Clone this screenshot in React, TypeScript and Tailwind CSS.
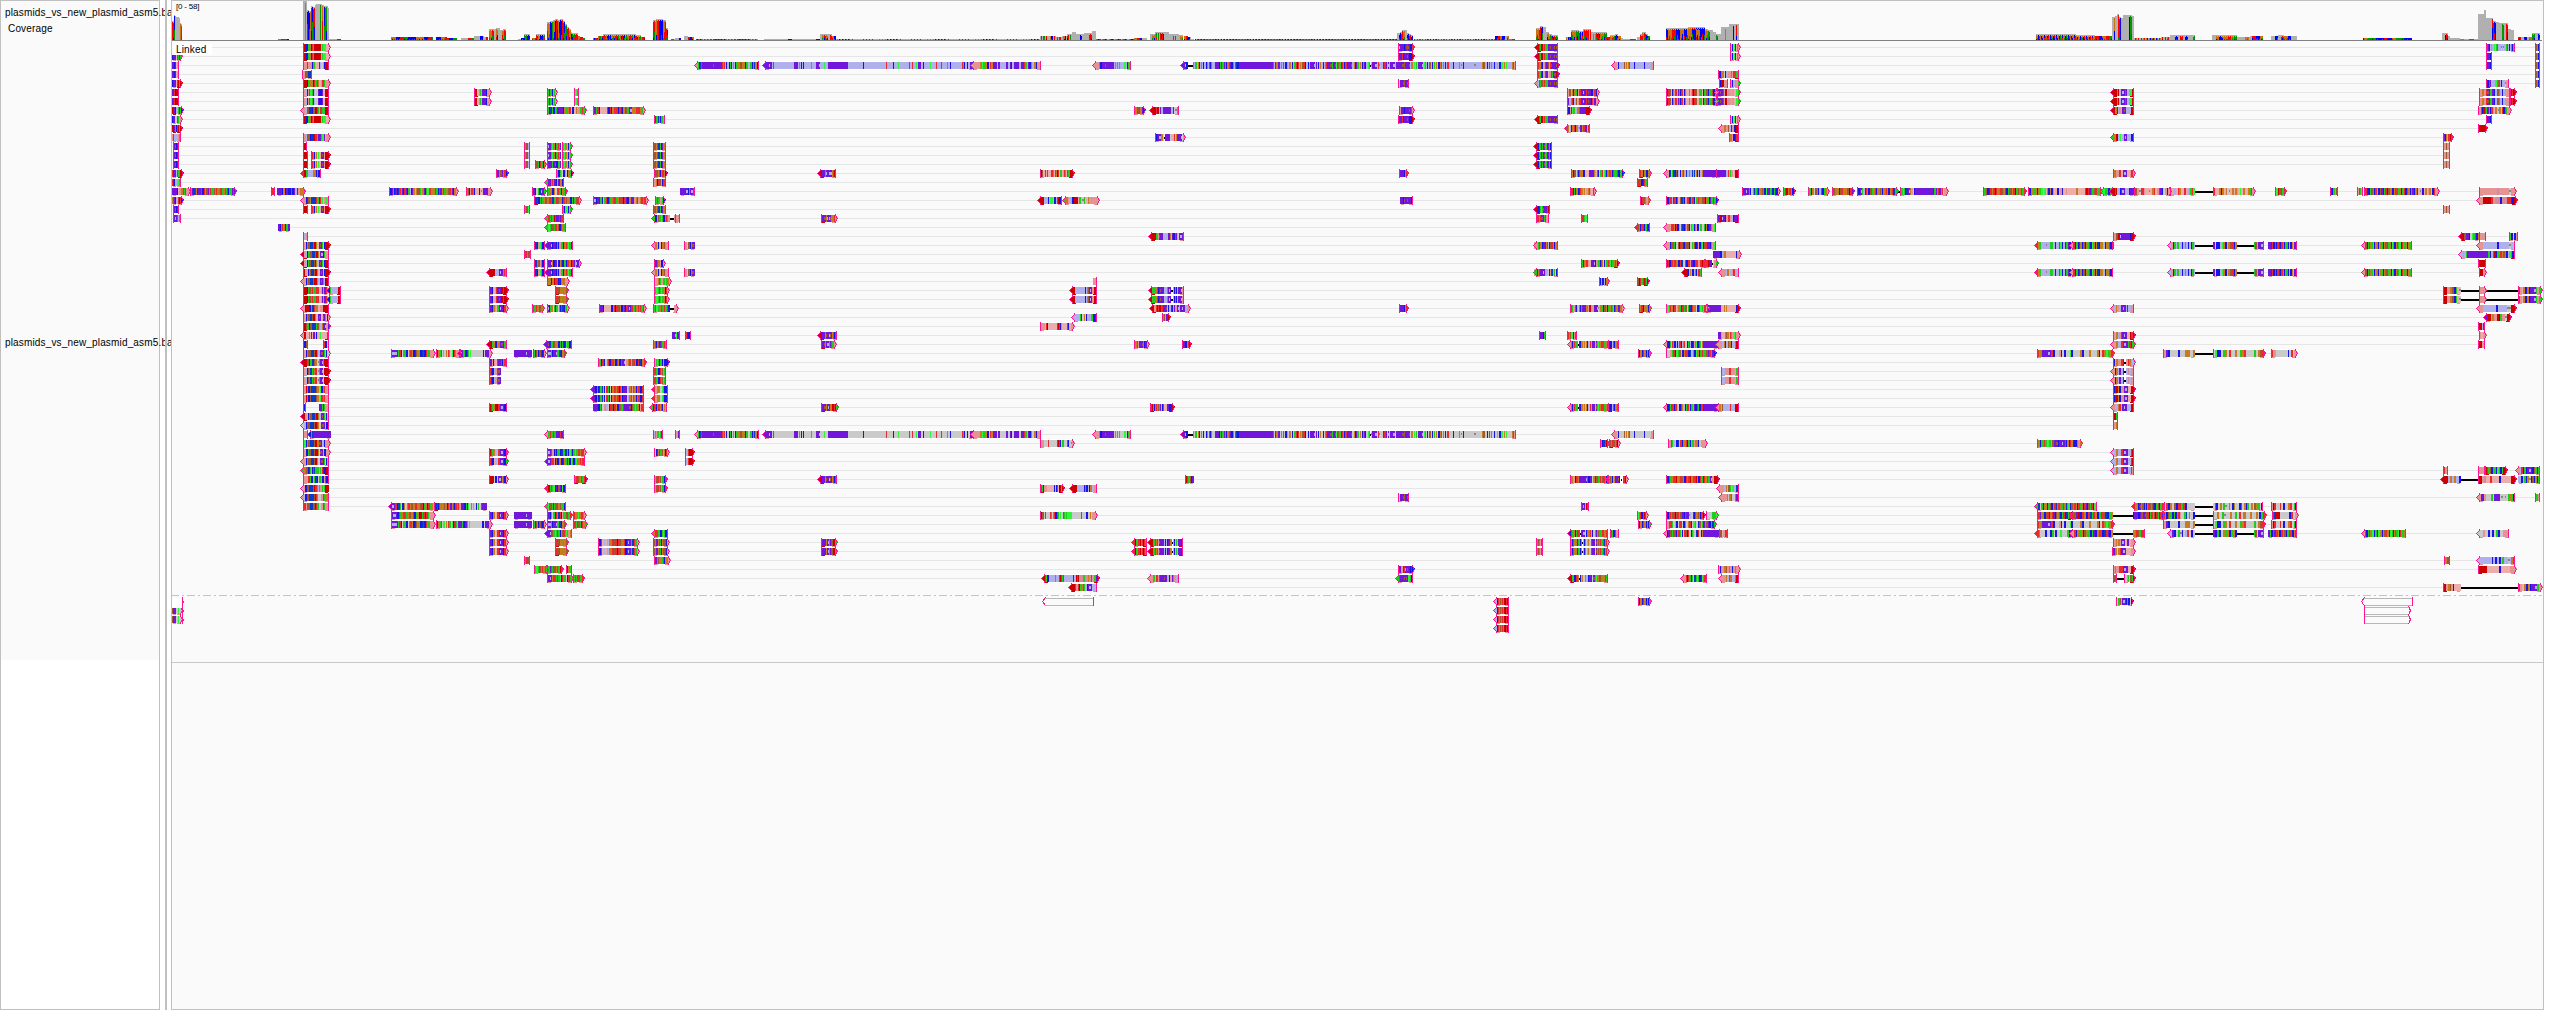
import React from "react";

const COLORS: Record<string, string> = {
  r: "#ea2a2e",
  s: "#cc0000",
  n: "#e59393",
  p: "#ecadad",
  l: "#b0b0ec",
  x: "#cacaca",
  u: "#7316dc",
  b: "#1a14e6",
  d: "#0a3cc8",
  g: "#22cc1e",
  e: "#2ef53a",
  o: "#cc7a22",
  t: "#ae8a18",
  w: "#a0582e",
  y: "#8c8488",
  m: "#d68a9c",
  k: "#000000",
};

const PINK = "#ff1493";

// Reusable stripe patterns; "z" stands for the background of the read.
const MOTIFS: Record<string, string> = {
  Q: "n2lbgw2d3ws2tz",
  R: "zujugzb",
  A: "ngbdru10ju8rorzbzbgbztzbgotgwrogtbgozgtbgdgobg",
  B: "u4iuzrz19u3zozbzbz6gz4u3iz3ez3u19z13bz11z10rz5bz4ez9rz2rz2ezu3z2bz5ez5rz3rz5oz2bz10rgbzbz2u3",
  C: "n5o2ego2bzrou3zu2z4u2zubzu4z2u2rgnuboz2obn3",
  D: "n4obu3juu6zozgzoz4ezbgog",
  E: "u2ibk5ozgzobzgzbzbozrbgz2u4bgugugbgorubgzrdb2u30wzuou2zozwzbezgozbzgrbrzoewrbzzbzu3izuzbzozbzgru3jgu2jerwgurgbwru3jz2obugzozboubzegkyu3izryz3uruzizu3izu3u3jwu4jzozezgzu3izegzbzwzbzgzozbowzgzbzrz4bz4ozyzbz9yz6owz2bzrzozbz2ezb2ezozez4orn2",
  F: "bgdzozgboruzbguorgzbrwu3ibgozbrogzb",
  G: "znbrbgzbrogzdbgrzbgrzozbrzdgzbrzdgozbwrgzezdgbzbgrzo",
  H: "ogrobrgubgowbzo2zbzorbuiuzbrorwgorgogworg",
  I: "u3bwruwu2iwzo",
  J: "u4jbujuiu2blu",
  K: "bguwdgbdu2bizu",
  L: "obguobgrb",
  P: "rgwbngozbwrgbrwogrbgobrgbwogrbgdrob",
};

type Read = { y: number; x0: number; x1: number; caps: string; pat: string };

// rows  start  end  caps  pattern[=background]
const READS = `
1 172 181 .> bu3prgsg
2,3 172 179 .| u2buzn2=p
4 172 181 .> bu3prsgs
5,6 172 179 .| u2rbus3
7 172 182 .> su2blgsgb
8 172 181 .> bu2zrgn2=x
9 172 181 .> s2uobrsgs
10 172 181 .| nrl3ngn
11,12,13,18 173 179 || u2jbub
14 172 182 .> ru2zrgs2=l
15 172 181 .| rubznegn=l
16 172 189 .> u5bzngorgrn3=p
17 172 182 .> orubzrsrb=l
19 173 181 || u2iuwlgn
0,1,8 303 329 |> s3bgotbrgs6nge2p3
2 303 329 || n3rnnebglp2ulxnbs3
3 302 312 || nlnw2d3b
4 303 329 |> s3bgotbrgwopnrgn3
5,6 303 329 || n2lbnregdlx2ub2up2s3
7 303 329 <| n2lw2d2bw2srgnrgogs3
10 303 329 |> n2lw2bds2rou2geupn2
11 303 307 || s3r
12,13,18 303 308 || s4r
12,13,18 311 329 |> brgblozepujunss3
14 303 321 <| rsgol4ogbgbo
16 190 235 |> bouduodu3rbrowruorgoworgtgrgtowgrbgouru
16 271 275 || grs
16 277 304 .> u3bobub2rbuluno3
17 303 329 <| n2bdwtd3srgsrepne2n
20 278 290 .. u2bgrobgou2
21 303 308 || nlnr
22 303 329 |> QRs4=p
23 303 329 <| sQuibgn4=p
24 303 329 <| sQRs4=l
25 303 329 |> s2QRs4=p
26 303 329 <| QRs3=l
27,28 303 328 |. s3bgwgrogrwrpnueurn
27,28 329 341 <| bgl6s3
29 303 329 <| ns3bgdrtoznns4=p
30 303 329 |> QzujuzRn=p
31 303 329 |> s2wgbwd3gwezouinu=l
32 303 329 <| QujuujugbBs3=p
33 303 308 || nbwn
33 323 329 || nrbp2
34 303 329 |> QRx2=l
35 303 329 <| s3w2bgd2woxyguigs4
36,37 303 329 |> n2lbwgdgworxyguips4
38 303 329 || n2sgbwd4wolebgrnn2
39 303 329 || n2sgbwd4wolergrnn2
40 303 306 || nbr
40 319 329 .| u2gdgn3
41 303 329 <| s2QRl2=l
42 303 329 <| xlbwwd3wsroxujulbn
43 303 308 || n4
43 310 331 <. bgdu18
44 303 329 |> xebtwd3wsgojulbnn2
45 303 329 |> Qjjulbn3=x
46 303 329 <| QRn2=x
47 303 329 <| gogwbdgebwdgogngnrsbs3
48 303 329 || n4rgblgdbxgebnrbn
49 303 329 <. lnbwwd3wsrolgngngs3
50 303 329 <| nlbwwd4wsroxxenrgogn
51 303 329 || nrnw2d3wsrgx2nrgnnn
5,6 474 490 |> s3xpegnu4bn3
14 496 507 |> u2owuorb
16 389 457 |> ubutbubdroubrubglbuolowrgeoubgewrogtrgbwuorgtowrgubon
16 466 491 |> rgwbnrgbp4bpypu4n3
25 489 507 <| s5l4uiuorgl
27,28 489 507 |> rubplrujusrs2
29 489 507 |> nubonpguiubrn
33 489 507 <| s2gosbogujugn
34 391 434 |> ui3ugrbzgobzgrobdwtobdubrogn3=x
34 436 460 |> rbogrzezozrgzebrgn3=x
34 460 491 <> u3gdbugzezx9bzu3n2=x
34 514 532 .. u12iu5
35 489 507 || runbnpru2rbgrg
36,37 489 501 |. rublnrju
40,45 489 507 || srgosbruiubx
45,46 489 507 |> rubplpruiubg
48 489 507 |> ss3xbxuiuorbn
51 391 434 <. uiurbdgzbozorowtorgowrbgobrgon=x
51 434 487 |. sdubrtogwobrguorbrgrnu3bgbezgzezbzgzru4=x
52 391 434 |> ui2ubrgorwgoworbgobsgrsrgn3=x
52,54,55,56 489 507 |> ruboxpruiubrn
53 391 434 |> ui3ugrbzgobzgrobdwtobdubrogn3=x
53 436 491 |> rbogrzezozrgzebrgnu3gdbugzezx9bzu3n2=x
52,53 514 532 .. u12iu5
5,6 547 556 |> bgdgbegn
5,6 574 579 || gegb
7 547 585 |> gbdgbgu4bogorzbzonegrg=p
7 593 644 |> u2grbp5rbrborwrbruborwguiogorwrogn
8 654 665 || nugdobgeg
11,12,13 524 530 || ngwlg
11,12 547 561 |. uiugegobgrgu
13 547 561 |. u4gu2jbgou
11,12,13 562 571 |> bgeonbng
13 535 545 |> rwgbrgbo
11,12,13,18 653 666 || uwowdgbuob
14 556 572 |> rgbgezbexbogb
14 654 666 |> grwowbgrob
15 547 564 <| gu2grgubeudobr
15 653 666 || gnobrwebrg
16 532 545 |> rubzgdiug
16 547 566 |> rgogbozwrgbogr
16 680 695 .| u5ibouirn
17 534 580 |> sdubgrgowgorwdgorwgobrgwogbgdgwrn
17 593 647 |> uibudgbpgrbrgowrgorwrbruboou2nornorgrn
17 655 664 |> rgwgnegb
18 524 530 || rgweb
18 562 571 |> bgbenbng
19 547 564 <| grgrgsru2rurn
19 654 679 <. gbewgegbgrgnk3n4
19 675 680 || grgd
20 547 566 <| gegrwgrowbwogn
22,25 534 545 || rdbnegbo
22,25 547 573 <| u3ibu2bgbnogborgegdb
22,25 654 669 <| zonbpbowenb=n
22,25 684 695 |. rnxwbgju
23 524 531 || srgwg
24 534 545 || bdgwngbw
24 547 580 |> u3iobu2zborbgobrgobruniun
24 654 664 |> nuwonbl
26 547 568 |> sotboswrbdbogonn
26 654 670 |> upnorgnogegon
27,28 555 567 |> srwrotgow
27,28 654 668 |> bgegrgegobrn
29 532 543 |> uwgrotwgo
29 547 568 |> uibgozgbgozgbrdbogn
29 599 645 |> buubp6borbrwrobrubruiurogrorgrgrn
29 653 677 |> gwegorgrgrbk3nn
14 820 836 <| s2u3oiui3owsr
19 821 836 |> su2joiuijotrn
32 546 573 .. h9
32 672 680 .| u2ieub
32 685 691 || rsbu
32,48 820 837 <| s2u3ojuijuowbrn
33 546 572 <| u2jdogrwgotbgbgdbdegb2u
33 653 667 || bowbgwurgorgn
33 821 835 |> su2jouiouwgtn
34,53 533 545 |> rgswobrwubsn
34,53 547 565 |> ui2gbu2igudbow
35 598 645 |> dgbrbzorbwrobrobruiznornwrgbrdbor
35 654 668 |> bngegbgbeb4
36,37 653 666 || brwgobrgwego
38,39 593 644 <| u2bgbdgdlbzrgbzborworbrobu3zlornwobgrwbro
40 593 644 .| u4bgrznelxbrwbrobrwgru4jbwgegobnrb
38,39 654 668 <| rnotgzegb3
40 652 667 <| gsrwbgrowblonr
40 821 837 |> su2jouiuotsrsg
43 547 564 <| ngrgrgu3rur
43 653 663 || glgngnguo
43 675 680 || enug
43 490 500 .. h5
45 547 585 |> uiurnbwbgobdogdgbegbgegortrrn
46 547 585 <| uiuwrnbwbgobdogdgbegbgegortrr
45 654 668 |> gxbuorgwnobrn
45,46 685 693 |> nlrbss
48 574 586 |> sgrwgorgrs
48,49 654 666 |> gewrgwegbr
49 547 566 <| rsgwgebubwubebw
51 547 566 <| gewrgdgwrotwogbn
52 547 571 |> ouboxgbrgdrbngowrgr
52 573 585 |> grogegorgn
53 573 586 |> grgrwgsrog
54 547 572 <| u2irwgegrgbowrgeonob
54 654 668 <| orwgobgegbu
55,56 555 567 |> srwrotgow
55,56 598 638 |> gbrplpnlogrwrbrwgorbuiugdrgn
55,56 653 668 |> rwguowgbowrbn
55,56 821 836 |> su3ouiouwssg
57 524 530 || sgrwb
57 654 669 |> bugwgogwbogn
58 534 547 |> bgegrwgrowg
58 547 562 |> uguwgwrorgsr
58 566 572 || rbogn
59 547 572 |> u2iuorwgrgebrgoxbrgo
59 573 583 |> rgwgrwgor
2,43 697 759 <| A=L
2,43 765 973 <. B=L
2,43 973 1041 <| C=L
2,43 1095 1131 <| D=L
2,43 1183 1516 <| E=L
2,43 1614 1654 <| n3lbz5wzozowz5bz9bz6n3=L
7 1134 1144 |> rorwroub
7 1152 1179 <| s3rs2lulu7lluzyog
10 1155 1184 |> gbsuioozku4zp3rpou3izn
14 1040 1073 |> gbwprzrpz2rgzrobrzgznrgzrgs3=p
17 1040 1062 <| s3l3ble2zblrsbp=l
17 1065 1098 <> gonlnbs3pgpygppon6
21 1151 1184 <| s4gonju2zl3u2olubruzxuiun=l
26 1093 1097 .| n3
27,28 1072 1097 <| s3l8bzowuiunsss=l
27,28 1151 1184 <| sg3orbuju2zl2ouiuklbgbzu2inn=l
29 1152 1189 <> s2nrsrswru2jlblublunuiluiu2lnn
30 1074 1097 <| l5gbzozblnlogbss
30 1162 1169 |> ngwnu2s
31 1040 1073 |> n4prbp7rsrbepp3rbpnn
33 1134 1148 |> rornu2jgbun
33 1182 1190 |> u3bors
40 1150 1173 |> srsgbgrowoulzbrp3u2bbss
44 1040 1073 |> n3x4rzx5rsrbxgxxxrbxyn
48 1185 1194 |. rswgowbuu
49 1040 1063 |> srgbn3p8bpbrpbsgs
49 1072 1097 <| s4l5boblbolln2
52 1040 1096 |> gbwzrz3rgzorbrgzezrgege4zz6rz4bz2oznn2=x
55,56 1134 1147 <| rbgorwsgrbrgs
55,56 1150 1183 <| s3gwornju3lblbu2oklblglu2s2
59 1044 1098 <> srgbl2z4gz2rsrgrz8dlsrsm4gm3ommrngous=l
60 1071 1097 <| s3rnrbgowglbuiuzll2=l
59 1150 1179 <| n3glrwnru3ju2lbnluonlng
0 1398 1413 |> liu4bujrjub2r
1,8 1398 1413 |> lu3rdu3jub3s
4,50 1398 1409 || nxu2jwujr
7 1399 1413 |> rnu3bu4juwn
14,29 1399 1407 |> su3bor
17 1400 1413 .| u3bjuju3bu
58 1398 1413 |> ru2nuriujubub
59 1398 1413 <| gru3jujuegbu
22,25 1534 1536 .. n
0,1,8 1537 1558 <| s2rgsgrogou2ju2juju
2 1537 1558 |> rroublnruwnrju2uju
3 1537 1558 |> rrogublnrupnnrgujjsu
4 1537 1558 <| nlrgwgrogou2ju2juju
11,12,13 1536 1552 <| sdbgugujogugbr
18 1536 1550 <| s2bdgegju3wsg
19 1536 1549 || nrorjugrnr
22 1536 1558 <| negrobu3orzbwrobgob=l
25 1536 1558 <| gdoru3iunlxbnudlgxbu=l
55,56 1536 1543 || egwgnrr
32 1539 1546 || ou2bgn
5 1567 1598 |> onwntbogbnru2iurujub2orbn
6 1567 1598 |> zuzorbzwznru2iurujubrounn=l
7 1567 1590 |> rbnuegllowu5s3
9 1567 1590 <| woxlborbo2lyu2oru2nrr
14 1571 1623 |> nobwzgbrogobzpzpu4onpwbzgrpeobgorgbwgogwbgob
16 1570 1595 |> grbgdtbsronoznornzrn=p
19 1581 1588 || grger
24 1581 1618 |> rgdorwnppu2ibnegbroxblgrgewgtros
26 1599 1608 |> rbeblbog
29 1570 1623 |> orgnwblxgbou3ognusnnu3iylogbwrobgorgebroguogn
32 1567 1577 || r2owebnru
33,40 1570 1608 <. ngbtrgoksbo2nozobzrnu3zjoegorwgtor=l
33,40 1608 1619 || sdblrbowb
44 1600 1608 |> ogbdrsr
44 1609 1619 |> swgrwgrbn
48 1570 1608 |> egonbrwou6irbu2zoouwgortwrgbe
48 1608 1627 <> rgwgbeou3jbhkhrrsn
51 1581 1589 || suiunsrb
54 1570 1608 <| bwgobgrwku2ixbgornbzouowgtrwort
54 1610 1619 || rgbrnn
55,56 1570 1608 |> rtbwtgosgtboknboznorpzru3zjowgrogwdgrn
59 1570 1608 <| s2gtbrwokbnozollbu3zjoegorwgtorgg
14 1639 1650 |> srobt2bt2
15 1637 1648 || srwbsrgn
17 1640 1649 |> srwgno
20 1637 1650 <| rwgbwrbogsbb
26 1637 1648 |> swbrgwsrgs
29 1639 1650 |> sorbot2bt
34,53,70 1638 1650 |> wbogbrotbobg
52 1637 1647 |> gegrbrsrn
5,6 1666 1717 |> obrwzbonrnuobrzbozpoznrbrwzpogzbgowbtgowbtg=p
14 1666 1716 <. n3bdlgdbwdlxblornldlloldndloblbllou12
14 1716 1739 || u8lrngnxps3
17 1666 1717 |> nbwrlurbrpwdrbnwrdgrbpgrgowrbogbugrgb
20 1666 1716 <| n4wrobrbnxrdbwnwbxgebonbxgoxgbobuuonee
22 1666 1716 <| n3brwgdxwbrwdbwrwbxgewbunbgebwruuboneg
24 1666 1705 |> urbrgrobrdxwbrnubrwnrsr
24 1705 1717 |> grsuukxng
25 1684 1702 <| s3blolblgblrgg
29 1666 1707 |> negrodrpnogdrgwxgdbrogxbwegern
29 1707 1739 |> u2ju10lp2opop8bss
33 1666 1718 <. ndbglrgblbzrbzorxbgrzbdngebrgxou12=l
34 1666 1715 |> uxxngrbegwlborwbdlgbeobgrgtwurgub
40 1666 1718 <. nbdgrwbrlxbrolbgrnbgeubrgbwruu10
44 1668 1706 |> nnrglxbdlrbgorbgbegnogbxnn3
48 1666 1718 |> b2rgowrsogrwgbrgrsowrsgbrgsrowguins3
52 1666 1704 |> bbwrgwrbwrowrubru2ylxubrowgbrb
52 1706 1717 |> nx4g3e
53 1666 1715 |> unwrgxnbxwrxbgxorbzegxbwnguowubgdg=x
54 1666 1719 <. nbuwrgwrbgrglbxrwbrxbgezdbrxbou13=x
54 1719 1728 || nwpnnrn
59 1683 1707 <| nnrbrgbgxdgegbdeorn
0,1,8 1730 1739 |> plblebpgn
3 1718 1739 || rbgoxblnngnrwgs
4 1719 1728 || bs2nnn
4 1730 1739 |> nbleng
5,6 1717 1739 <> mujurnsnmnlnppeg
9 1721 1739 <| nnonwlsnbs2
10 1729 1739 || nonbsrs
19 1717 1739 || uusiubnrnlbu2s
23 1713 1740 .> u5blnopp6bn2
25 1721 1739 <| n3loplnrlln
32 1718 1739 .> u2nppowopronegn2
33 1718 1739 <| n3loblwobl2gss
36,37 1721 1739 || nllnnnrnnnlgn
40 1718 1739 <| nonwlllllrlllsss
49 1719 1739 <| n4lolwglelldb
50 1721 1739 <| n4oxowxxgu2
58 1718 1739 |> nbnnowngnbnonn
59 1721 1739 <| n3olwollgss
16 1742 1779 |> u3iugbxgdgrbogwgbeuugobgubn
16 1783 1794 |> grsorgb
16 1808 1828 |> rgbozwgblrbgoe
16 1832 1853 |> rwgotbwrogowbru
16 1857 1897 |> rbuiglsrgbwrgorbgowgbogrtbogrdog
16 1897 1900 .. k2
16 1900 1947 |> rgegbduionxbu14dgugruorxnn
16 1983 2025 |> ngwbsrorbrogrworbgwrorbgworgr
16 2028 2101 |> ubotgobtgezezobobnpzbznbpznp6ozpzpzwsrurgwrogr=p
16 2103 2112 <. eggbg
5,6 2113 2134 <| s3oslluiurulleess
7,22 2113 2114 .. r
7 2113 2134 <| s2oslenlujulllldss
10 2113 2134 <| gosblepluiulllbn
14 2113 2134 |> nonnrrpuiuppnrn
16 2112 2134 <. sswsllbuiulllbu3
16 2134 2170 |> rwnywrnppyporpnrubznbn
16 2170 2195 |. npllpropprplegre
16 2195 2213 .. k18
16 2213 2254 |> rpppobopozypoponpepoppogrn
16 2275 2285 |> geswrgr
16 2330 2338 || sdbgewg
16 2357 2363 || rnrgeb
16 2364 2438 |> grsbgwgbrebwubgrbwogborwgobgrbwobgubouzyzbzoznozbrn2=p
21 2113 2134 |> lnwrsiu7bss
22,25 2037 2072 <. roglllyllgglbllreblsgubl=l
22,25 2072 2113 <| nrbgbutbwbtgrbeobtdbotlbotrbo
22,25 2170 2195 <. lnbglgllblolblbgl
22,25 2195 2213 .. k18
22,25 2213 2237 .. uxbbleoblowrbo
22,25 2237 2254 .. k18
22,25 2254 2264 .| gwnu2iu
22,25 2268 2297 .| u2drbwbrubrobtgblbolun
22,25 2364 2412 <| nwbgrtgebogbetgbowrgtbegbowgebrogtbogb
54 2364 2406 <| nwbgrtgebogbetgbowrgtbegbowgebrogtg
29 2113 2134 <| nlonlluiulullnl
32 2113 2134 |> nlolnruiuppsrs
33 2113 2134 <> nnollruiugrsg
34,53 2037 2113 |> rtguu2iurbxxnbxbxxebxxxxobxxxoxxxobxroegor
35 2113 2134 |> blonnruknronl
36,37 2113 2134 <| nboluluklmlnn
38,39 2113 2134 |> busobnnuiuppss
40 2113 2134 <| nllorluiulllss
41 2113 2118 || rsgs
42 2113 2118 || rnon
44 2037 2081 |> otbgorgnegewuujbuuiurbobrodbbtno
45,46 2113 2134 <| llollruiullrs
47 2113 2134 <| llollruiullrn
51 2037 2097 <| gdxgbtobgwbgrdorogrtdgebwgrtbrgobrubwgrbeg
51 2134 2164 <. rgobujgwbtborwowubgtwbgrw
51 2164 2195 |. xrboxwbrgrbxxxx
51,52,53,54 2195 2213 .. k18
51 2213 2263 .| xwbxtxgyxgxbtxxbrxobgxoxwtgxb
51,53 2271 2297 || nbrxxrxbxxorxgb
52 2037 2072 |. brutgbwrsorubwtrbgrbdgrs
52 2072 2113 <. rwusbrobrdgrobgrwdbgo
52,54 2113 2133 .. k20
52 2133 2163 .> bu3burwujwrbgrowbrguru
52 2163 2195 |. rtbwgobgbornxxgdxgxxb
52 2213 2265 |> xxoxxgyxxoxxgxrxogxxoxxoxbgr
34,53 2163 2195 |. nnubxxxxxbxxxoooxxo
34 2195 2213 .. k18
34,53 2213 2264 |> xebbxgoxrxxoxxgorxxxxgxowr
52 2272 2297 |> rdssxxxxxbrxn
34 2271 2296 |> rnnxxxxxxxbxrxn
54 2037 2072 <. rgxxxbxxbgxbxxexxxgbu
54 2072 2113 <. nrbogobwtgbguborwbdrubo
54 2133 2145 .| ogrwgwrg
54 2170 2195 <. lubxgybxlrxbx
54 2213 2237 .. ubgbxtgobgob
54 2237 2254 .. k18
54 2254 2264 .| gwxu2iu
54 2268 2297 .| ugbwurobrgwbgrwbor
55 2113 2134 |> rnononuiuppuppnn
56 2112 2134 |> uuoxoruiupppnn
58 2113 2134 |> nonnrruiuppss
59 2113 2117 || gwg
59 2117 2124 .. k7
59 2124 2134 |> nxegpwgs
70 2116 2132 |> rxgwnuiubgbxb
10 2443 2452 |> uubonrwsr
11,12,13,18 2443 2450 || nnwnl
0 2486 2515 || rwublmllelgwllylyllgwlblgbgb
1,2,8 2486 2492 || nuubl
4 2486 2509 || sbrulllegwlbllynn
5,6 2479 2510 || nnonrjugublwglblnnn
5,6 2510 2515 |> srs
7 2478 2510 |> nnrbsrgugbrnpopyoprbwgnn
9 2478 2486 |> ss
16 2479 2515 |> nnnnnnnnnmnnnnnynn
17 2479 2516 <> nnsssssrnmmmbmmmrrsbs
21 2461 2479 <. sswuubxegwbo
21 2479 2486 || nnn
21 2509 2518 || gbxbn
22 2479 2515 <| nnlllllllblllllylp
23 2461 2515 <| lnlgu14gblrsbggrowgblegbs
24 2478 2486 || ss
25 2479 2485 |> ssn
27,28 2443 2461 |. ssnnowbgpy
27,28,60 2461 2479 .. k18
27,28 2479 2485 |> nn
27,28,60 2485 2518 .. k18
27,28 2518 2541 |> rnpobobuuigng
29 2479 2515 <> nnlllllllblllllyyss
30 2486 2510 <> ussnonnsbgnnyss
31 2478 2485 || sslu
32 2479 2485 |> npn
33 2478 2485 || ssnn
47 2443 2448 || rnn
47 2478 2485 || nn
47 2485 2506 |> srgwbogbegbgss
47 2518 2540 <| nlrbgbuiubwgbg
48 2443 2461 <. ssslolollb
48 2461 2479 .. k18
48 2478 2515 |> ssnmpprpppbpppppss
48 2518 2540 .| llblgbtybwbtbg
50 2479 2515 <| nuunxxxgxuuuxyxyxgogb
50 2535 2540 || lgng
0,1,2,3,4 2535 2540 || gwgbg
54 2479 2509 <| xxnxxbxbxgbxxnnn
57 2444 2450 || oows
57 2479 2515 <| lllllllblblblgllylor
58 2478 2515 |> sssspppppbppppnn
60 2443 2461 |. ssnownbpppp
60 2461 2518 .. k30
60 2518 2541 |> rnpobobuuign
71,72 172 181 .> wu3xxexx
70,71,72,73 1496 1509 <| lbwrtworgosbrgdx
`;

function expand(p: string, bg: string): [string, number][] {
  const flat = p.replace(/[A-Z]/g, (m) => MOTIFS[m] ?? "");
  const out: [string, number][] = [];
  const re = /([a-z])(\d*)/g;
  let m: RegExpExecArray | null;
  while ((m = re.exec(flat))) out.push([m[1] === "z" ? bg : m[1], m[2] ? Number(m[2]) : 1]);
  return out;
}

const rowTop = (r: number) => (r >= 70 ? 598 + (r - 70) * 9 : 44 + r * 9);

const paths: Record<string, string> = {};
const extents: Record<number, [number, number]> = {};
let backing = "";
let outline = "";
const arrows: { d: string; fill: string }[] = [];

function put(c: string, x: number, y: number, w: number, h: number) {
  paths[c] = (paths[c] ?? "") + `M${x} ${y}h${w}v${h}h${-w}z`;
}

for (const line of READS.trim().split("\n")) {
  const [rows, a, b, caps, spec] = line.split(" ");
  const x0 = Number(a);
  const x1 = Number(b);
  const [pat, bgSpec] = spec.split("=");
  for (const rs of rows.split(",")) {
    const r = Number(rs);
    const y = rowTop(r);
    const bg = bgSpec === "L" ? (r === 2 ? "l" : "x") : bgSpec ?? "x";
    const tokens = expand(pat, bg);
    if (tokens[0][0] === "h") continue;
    const total = tokens.reduce((s, t) => s + t[1], 0);
    const e = extents[r] ?? [x0, x1];
    extents[r] = [Math.min(e[0], x0), Math.max(e[1], x1)];
    if (tokens[0][0] !== "k") backing += `M${x0} ${y - 1}h${x1 - x0}v9h${x0 - x1}z`;
    let acc = 0;
    for (const [c, n] of tokens) {
      const s = Math.round(x0 + (acc / total) * (x1 - x0));
      acc += n;
      const f = Math.round(x0 + (acc / total) * (x1 - x0));
      if (f <= s || c === "h") continue;
      if (c === "k") put("k", s, y + 3, f - s, 2);
      else if (c === "i" || c === "j") {
        put("u", s, y, f - s, 7);
        put(c === "i" ? "sl" : "so", s, y + 2, f - s, 3);
      } else if (c === "y") {
        put(bg, s, y, f - s, 7);
        put("sy", s, y + 2, f - s, 2);
      } else put(c, s, y, f - s, 7);
    }
    const first = tokens[0][0];
    const last = tokens[tokens.length - 1][0];
    if (first !== "k" && x1 - x0 > 8) {
      put(first === "s" ? "s" : "n", x0 + 1, y + 7, 3, 1);
      if (last !== "k") put(last === "s" ? "s" : "n", x1 - 4, y + 7, 3, 1);
    }
    if (caps[0] === "|") outline += `M${x0} ${y - 1}h1v9h-1z`;
    if (caps[1] === "|") outline += `M${x1 - 1} ${y - 1}h1v9h-1z`;
    if (caps[0] === "<") {
      arrows.push({ d: `M${x0 + 1} ${y}h-1l-2 3l2 4h1z`, fill: COLORS[first] ?? COLORS.n });
      outline += `M${x0} ${y - 1}h1v2h-1zM${x0 - 1} ${y + 1}h1v1h-1zM${x0 - 2} ${y + 2}h1v1h-1zM${x0 - 3} ${y + 3}h1v1h-1zM${x0 - 2} ${y + 4}h1v1h-1zM${x0 - 1} ${y + 5}h1v1h-1zM${x0} ${y + 6}h1v2h-1z`;
    }
    if (caps[1] === ">") {
      arrows.push({ d: `M${x1 - 1} ${y}h1l2 3l-2 4h-1z`, fill: COLORS[last] ?? COLORS.n });
      outline += `M${x1 - 1} ${y - 1}h1v2h-1zM${x1} ${y + 1}h1v2h-1zM${x1 + 1} ${y + 3}h1v1h-1zM${x1} ${y + 4}h1v2h-1zM${x1 - 1} ${y + 6}h1v2h-1z`;
    }
  }
}

// start  end  colours  heights
const COVERAGE = `
172 182 rbxxxxog 19,25,24,23,23,22,17,16
278 289 orgb 1,1
303 329 xoxbbborbrrxxxxgxoxbggxx 39,39,30,29,34,33,35,36,36,36,35,34,34,32
329 341 xxr 1,1
391 433 obgbobr 3,3
436 457 borbg 3,2
461 474 xxrg 2,2
474 488 xxbxr 4,4,3
489 506 orxoxxor 11,11,12,10,11
518 530 xbgb 1,2,6,6
532 545 orobg 2,6,6,6
547 565 oobgobrobbrb 18,19,20,21,20,21,19
565 572 grob 16,13,11,8
572 585 grorg 7,7,4,3,2
593 645 grborobogr 2,4,6,6,6,6,6,6,6,5,3
653 668 rorbborb 20,21,21,21,20,12
671 681 gxxb 1,2,2
684 694 xxrbo 4,3,3
696 758 gbgoxr 1,1
764 820 xxxbxxx 1,1
820 836 xoroxrob 6,6,6,4
836 1040 xxrgxxoxbxxx 1,1
1040 1072 xgxbxrorxx 4,4,4,3,4,6
1072 1096 xxxbxxxrxx 8,6,6,7,7,9
1096 1134 rgxbo 1,1
1134 1147 orbxx 2,2
1150 1183 xxrogxxxxboxxg 6,8,8,8,6,6,5
1184 1194 orbxx 4,3,1
1195 1397 rgobrxbo 1,1
1397 1413 xbroxbrb 7,8,10,10,7,6,5
1414 1495 xrxgxb 1,1
1495 1509 brobxo 4,4,4
1509 1515 or 1,1
1536 1558 orbxxogbrg 12,14,13,8,6,5,5
1566 1607 brooxrgrxboorg 3,10,10,9,11,11,8,8,8,8
1607 1623 rogbox 3,5,5,6,4,2
1623 1636 xxrg 1,1
1637 1650 xrorbg 3,6,8,8,6,4
1666 1702 orbrbob 12,12,12,12,12
1682 1705 borbb 12,13,13,13
1702 1718 rogxxg 11,11,10,10,8,6
1718 1729 xxxxoxx 6,13,13,13
1729 1739 xxxbxrxx 16,16,16
2036 2095 oboobrobg 6,6,6,6,5,5
2095 2112 rborg 4,4
2112 2134 xoxxrbxxxxxbgxx 23,24,26,23,22,25,25,25,25,24
2134 2170 oxrxob 2,2,2,3
2170 2195 xxbxrxbxxg 5,5
2212 2237 xoboorog 5,5
2237 2263 xxoxrbo 3,3,4,4
2271 2297 xbxrobxx 4,5,4,4
2363 2412 bgorbgb 2,2
2442 2450 xxbrxx 7,7,4
2450 2478 xxoxgx 2,1,1
2478 2486 xxxxxxx 26,26,30
2486 2514 xxxrbxxxgxrxxx 22,22,19,18,17,17,17,11,10
2518 2540 rxbxogxb 3,3,3,7,7
`;

const covPaths: Record<string, string> = {};
const COV_COLORS: Record<string, string> = {
  x: "#b0b0b0",
  r: "#ff0000",
  b: "#0000ff",
  g: "#009a00",
  o: "#cc7010",
};
for (const line of COVERAGE.trim().split("\n")) {
  const [a, b, mix, hs] = line.split(" ");
  const x0 = Number(a);
  const x1 = Number(b);
  const hl = hs.split(",").map(Number);
  for (let x = x0; x < x1; x++) {
    const h = hl[Math.min(hl.length - 1, Math.floor(((x - x0) / (x1 - x0)) * hl.length))];
    const i = x1 - x0 < 30 ? Math.floor(((x - x0) / (x1 - x0)) * mix.length) : (x * 7 + (x >> 2) * 3) % mix.length;
    const c = mix[i];
    const add = (k: string, y: number, hh: number) => {
      if (hh > 0) covPaths[k] = (covPaths[k] ?? "") + `M${x} ${y}h1v${hh}h-1z`;
    };
    if (c === "x" || h < 2) {
      add(c, 40 - h, h);
      continue;
    }
    const top = h > 4 ? 1 + ((x * 5) % 2) : 0;
    add("x", 40 - h, top);
    const rest = h - top;
    const low = Math.floor((rest * ((x * 37) % 5)) / 7);
    add(c, 40 - h + top, rest - low);
    add("gbr"[(x * 11) % 3], 40 - low, low);
  }
}

const links = Object.entries(extents)
  .filter(([r]) => Number(r) < 70)
  .map(([r, [s, f]]) => {
    const left = Number(r) <= 19 ? 172 : s;
    return `M${left} ${rowTop(Number(r)) + 3}h${f - left}v1h${left - f}z`;
  })
  .join("");

function AlignmentCanvas() {
  return (
    <svg className="block" width="2371" height="661" viewBox="172 1 2371 661" shapeRendering="crispEdges">
      {Object.entries(covPaths).map(([k, d]) => (
        <path key={k} d={d} fill={COV_COLORS[k]} />
      ))}
      <rect x="172" y="40" width="2370" height="1" fill="#808080" />
      <path d={links} fill="#e6e6e6" />
      <path d="M172 595.5H2542" stroke="#c4c4c4" strokeWidth="1" strokeDasharray="8 3 2 3" strokeDashoffset="1" />
      <path d={backing} fill="#ffffff" />
      {Object.entries(paths)
        .filter(([k]) => k.length === 1)
        .map(([k, d]) => (
          <path key={k} d={d} fill={COLORS[k]} />
        ))}
      <path d={paths.sl} fill={COLORS.l} />
      <path d={paths.so} fill={COLORS.w} />
      <path d={paths.sy} fill={COLORS.y} />
      {arrows.map((a, i) => (
        <path key={i} d={a.d} fill={a.fill} />
      ))}
      <path d={outline} fill={PINK} />
      {/* reads without mapping quality are drawn hollow */}
      <g fill="none" stroke="#b8b8b8">
        <path d="M1045 598.5H1093M1045 605.5H1093" />
        <path d="M2364 598.5H2412M2364 605.5H2412M2365 607.5H2409M2365 614.5H2409M2365 616.5H2409M2365 623.5H2409" />
      </g>
      <g fill="none" stroke={PINK}>
        <path d="M1093.5 597V606M1045.5 597.5L1042.5 601.5L1045.5 605.5" />
        <path d="M2412.5 597V606M2364.5 597.5L2361.5 601.5L2364.5 606V624M2408.5 606L2410.5 610.5L2408.5 615L2410.5 619.5L2408.5 624" />
        <path d="M182.5 597V624M183.5 601V603M183.5 610V612M183.5 619V621" />
      </g>
      <rect x="172" y="598" width="9" height="10" fill="#ffffff" />
    </svg>
  );
}

export default function App() {
  return (
    <div className="flex h-[1010px] w-[2560px] overflow-hidden bg-white font-['Liberation_Sans',Arial,sans-serif] text-[10px] leading-none tracking-[0.16px] text-black">
      <aside className="flex w-[160px] shrink-0 flex-col border border-[#c0c0c0]">
        <div className="flex h-[659px] shrink-0 flex-col bg-[#fafafa] whitespace-nowrap">
          <div className="h-[16px] pt-[7px] pl-[4px]">plasmids_vs_new_plasmid_asm5.bam</div>
          <div className="h-[314px] pt-[7px] pl-[7px]">Coverage</div>
          <div className="pt-[7px] pl-[4px]">plasmids_vs_new_plasmid_asm5.bam</div>
        </div>
      </aside>
      <div className="ml-[5px] w-[2px] shrink-0 bg-[#c0c0c0]" />
      <main className="relative z-10 ml-[4px] flex w-[2373px] shrink-0 flex-col border border-[#c0c0c0] bg-[#fafafa]">
        <div className="h-[662px] shrink-0 border-b border-[#c8c8c8]">
          <AlignmentCanvas />
        </div>
        <div className="grow" />
        <span className="absolute top-[2px] left-[4px] text-[8px] tracking-[-0.2px]">[0 - 58]</span>
        <span className="absolute top-[43px] left-0 h-[11px] w-[40px] bg-white pt-px pl-[4px]">Linked</span>
      </main>
    </div>
  );
}
